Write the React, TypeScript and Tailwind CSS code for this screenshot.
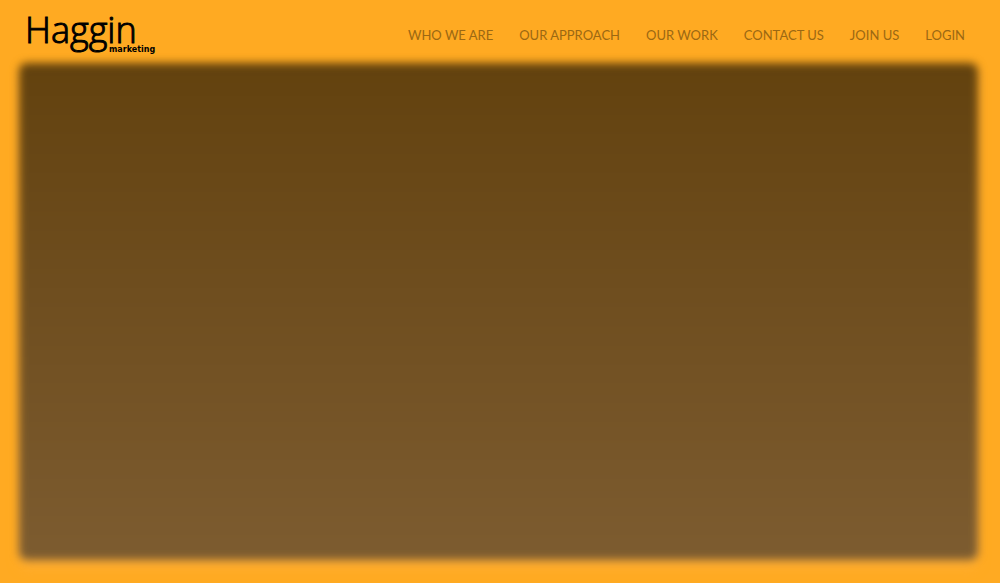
const links = [
  { label: 'WHO WE ARE', href: '#who-we-are' },
  { label: 'OUR APPROACH', href: '#our-approach' },
  { label: 'OUR WORK', href: '#our-work' },
  { label: 'CONTACT US', href: '#contact-us' },
  { label: 'JOIN US', href: '#join-us' },
  { label: 'LOGIN', href: '#login' },
];

function Logo() {
  return (
    <a href="#home" className="relative block text-black">
      <span className="block font-['Open_Sans',sans-serif] text-[36px] leading-10 font-light [-webkit-text-stroke:1px_black]">
        Haggin
      </span>
      <span className="absolute top-[34px] left-21 font-['DejaVu_Sans',sans-serif] text-[8px] leading-3 font-bold">
        marketing
      </span>
    </a>
  );
}

export default function App() {
  return (
    <div className="flex min-h-screen flex-col bg-[#ffaa22]">
      <header className="flex h-[63px] shrink-0 items-start justify-between pt-[10px] pr-[35px] pl-[25px]">
        <Logo />
        <nav className="pt-[13px] font-['Lato',sans-serif] text-[13px] leading-6 text-[#9b6813]">
          <ul className="flex gap-[26px]">
            {links.map((link) => (
              <li key={link.href}>
                <a href={link.href} className="hover:text-black">
                  {link.label}
                </a>
              </li>
            ))}
          </ul>
        </nav>
      </header>
      <main className="mr-[22px] mb-[23px] ml-[19px] flex flex-1 flex-col">
        <div className="flex flex-1 flex-col rounded-lg bg-linear-to-b from-[#ffaa22] to-[#ffae33] shadow-[0_8px_12px_#ffae33]">
          <div className="flex-1 rounded-lg bg-linear-to-b from-[#63420e] to-[#7d5c30] blur-xs" />
        </div>
      </main>
    </div>
  );
}
